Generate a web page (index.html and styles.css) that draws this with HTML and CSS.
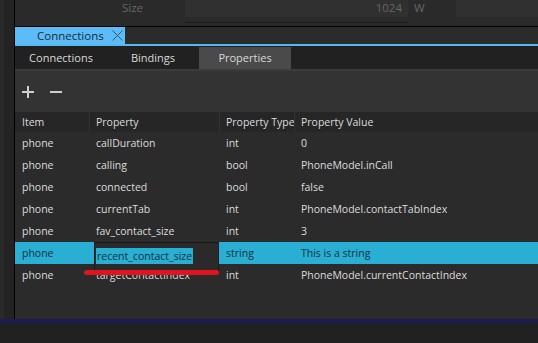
FILE: index.html
```html
<!DOCTYPE html>
<html lang="en">
<head>
  <meta charset="UTF-8" />
  <title>Connections</title>
  <link rel="stylesheet" href="styles.css">
</head>
<body>
  <div class="shell">
    <div class="side"></div>
    <div class="pane">
      <div class="top">
        <div class="top-label">Size</div>
        <div class="num">1024</div>
        <div class="unit">W</div>
        <div class="top-rest"></div>
      </div>

      <div class="tabbar">
        <div class="tab">
          Connections
          <svg class="close" width="11" height="11" viewBox="0 0 11 11">
            <path d="M0.5 0.5 L10.5 10.5 M10.5 0.5 L0.5 10.5" stroke="#3a5a70" stroke-width="1" fill="none" />
          </svg>
        </div>
      </div>

      <nav class="subtabs">
        <a class="subtab">Connections</a>
        <a class="subtab">Bindings</a>
        <a class="subtab active">Properties</a>
      </nav>

      <div class="toolbar">
        <span class="tool plus"></span>
        <span class="tool minus"></span>
      </div>

      <div class="table">
        <div class="row head">
          <div>Item</div><div>Property</div><div>Property Type</div><div>Property Value</div>
        </div>
        <div class="row"><div>phone</div><div>callDuration</div><div>int</div><div>0</div></div>
        <div class="row"><div>phone</div><div>calling</div><div>bool</div><div>PhoneModel.inCall</div></div>
        <div class="row"><div>phone</div><div>connected</div><div>bool</div><div>false</div></div>
        <div class="row"><div>phone</div><div>currentTab</div><div>int</div><div>PhoneModel.contactTabIndex</div></div>
        <div class="row"><div>phone</div><div>fav_contact_size</div><div>int</div><div>3</div></div>
        <div class="row selected">
          <div>phone</div>
          <div class="editor"><span class="sel">recent_contact_size</span><span class="mark"></span></div>
          <div>string</div>
          <div>This is a string</div>
        </div>
        <div class="row"><div>phone</div><div>targetContactIndex</div><div>int</div><div>PhoneModel.currentContactIndex</div></div>
      </div>
    </div>
  </div>
  <div class="statusline"></div>
</body>
</html>
```

FILE: styles.css
```css
body {
  margin: 0;
  background: #212121;
  font-family: 'Open Sans', 'Noto Sans', sans-serif;
  font-size: 10.5px;
  color: #dcdcdc;
  width: 538px;
  height: 343px;
  overflow: hidden;
}
.shell {
  display: flex;
  height: 319px;
}
.side {
  width: 10px;
  border-left: 4px solid #2a2a2a;
  border-right: 1px solid #000;
  background: #232323;
}
.pane {
  flex: 1;
  display: flex;
  flex-direction: column;
  background: #2b2b2b;
}

/* top property strip (scrolled, mostly hidden) */
.top {
  height: 26px;
  border-bottom: 1px solid #000;
  display: flex;
  background: #2a2a2a;
  color: #666;
  font-size: 11.5px;
  line-height: 15px;
}
.top-label {
  width: 170px;
  padding-left: 107px;
  box-sizing: border-box;
}
.num {
  width: 223px;
  height: 23px;
  padding-right: 6px;
  box-sizing: border-box;
  text-align: right;
  border-bottom: 1px solid #1b1b1b;
  background: linear-gradient(#303030 17px, transparent 17px);
}
.unit {
  width: 48px;
  padding-left: 6px;
  box-sizing: border-box;
}
.top-rest {
  flex: 1;
  height: 17px;
  background: #303030;
}

.tabbar {
  height: 17px;
  border-bottom: 2px solid #55b8f0;
  display: flex;
}
.tab {
  width: 110px;
  background: #5bbcf7;
  color: #1a2a36;
  font-size: 11.5px;
  line-height: 17px;
  padding-left: 22px;
  box-sizing: border-box;
  white-space: nowrap;
  display: flex;
  align-items: center;
  gap: 8px;
}
.subtabs {
  height: 23px;
  background: #212121;
  display: flex;
  border-bottom: 2px solid #3b3b3b;
}
.subtab {
  width: 92px;
  text-align: center;
  line-height: 23px;
  color: #d9d9d9;
  font-size: 11px;
}
.subtab.active {
  background: #4a4a4a;
  height: 22px;
  margin-top: 1px;
  line-height: 22px;
}
.toolbar {
  height: 41px;
  background: #333;
  display: flex;
  align-items: center;
  gap: 16px;
  padding-left: 7px;
}
.tool {
  width: 12px;
  height: 12px;
  position: relative;
}
.tool::before,
.plus::after {
  content: "";
  position: absolute;
  left: 0;
  top: 5px;
  width: 12px;
  height: 2px;
  background: #cfcfcf;
}
.plus::after {
  left: 5px;
  top: 0;
  width: 2px;
  height: 12px;
}
.table {
  display: flex;
  flex-direction: column;
}
.row {
  display: grid;
  grid-template-columns: 74px 130px 75px 1fr;
  height: 22px;
  line-height: 22px;
}
.row > div {
  padding-left: 7px;
  white-space: nowrap;
}
.row.head {
  height: 20px;
  line-height: 20px;
  background: #262626;
}
.row.head > div + div {
  border-left: 1px solid #333;
  padding-left: 6px;
}
.row.selected {
  background: #29afd4;
  color: #13303a;
}
.row .editor {
  background: #2a2a2a;
  border: 1px solid #1a1a1a;
  margin-left: 5px;
  padding-left: 1px;
  position: relative;
  box-sizing: border-box;
  line-height: 27px;
}
.sel {
  background: #29afd4;
  color: #13303a;
  padding: 1px;
}
.mark {
  position: absolute;
  left: -11px;
  right: -1px;
  bottom: -5px;
  height: 5px;
  border-radius: 3px;
  background: #e0141e;
}
.statusline {
  height: 4px;
  background: #1c1c52;
}
```
